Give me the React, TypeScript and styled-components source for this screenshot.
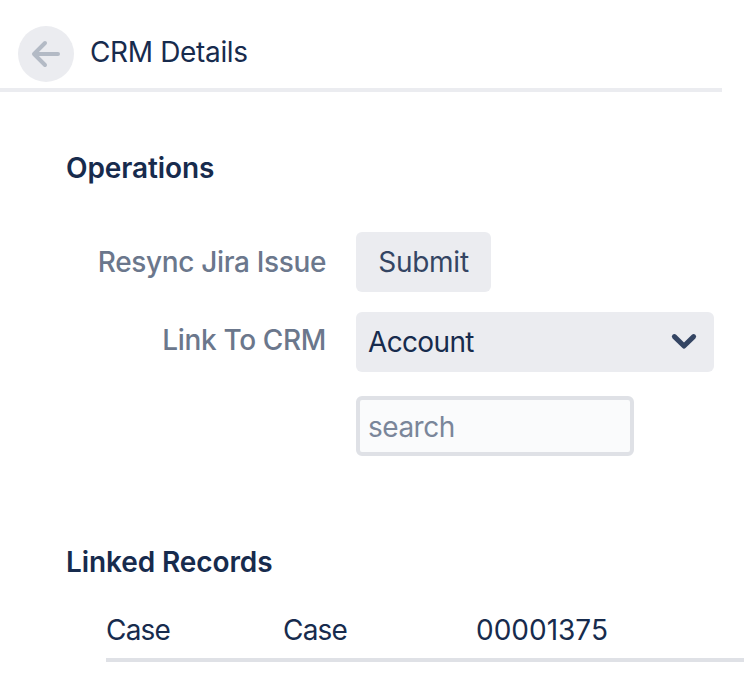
import React from 'react';
import styled, { createGlobalStyle } from 'styled-components';

const GlobalStyle = createGlobalStyle`
  * {
    box-sizing: border-box;
  }

  body {
    margin: 0;
    background: #ffffff;
    color: #172b4d;
    font-family: Inter, 'Liberation Sans', sans-serif;
    font-size: 28px;
    overflow: hidden;
  }
`;

const Panel = styled.main`
  width: 744px;
  height: 686px;
  overflow: hidden;
`;

const Header = styled.header`
  display: flex;
  align-items: flex-end;
  gap: 16px;
  width: 722px;
  height: 92px;
  padding: 0 0 6px 18px;
  border-bottom: 4px solid #ebecf0;
`;

const BackButton = styled.button`
  display: flex;
  align-items: center;
  justify-content: center;
  width: 56px;
  height: 56px;
  padding: 0;
  border: 0;
  border-radius: 50%;
  background: #ebecf0;
`;

const Title = styled.h1`
  margin: 0 0 12px;
  font-size: 28px;
  font-weight: 400;
  line-height: 36px;
  letter-spacing: -0.35px;
`;

const SectionTitle = styled.h2`
  margin: 0 0 0 66px;
  font-size: 28px;
  font-weight: 600;
  line-height: 36px;
  letter-spacing: -0.1px;
`;

const Operations = styled.section`
  padding-top: 58px;
`;

const Form = styled.form`
  display: grid;
  grid-template-columns: 326px 358px;
  column-gap: 30px;
  margin-top: 46px;
`;

const Label = styled.label<{ $lineHeight: number }>`
  color: #6b778c;
  font-weight: 500;
  line-height: ${(props) => props.$lineHeight}px;
  letter-spacing: -0.35px;
  text-align: right;
`;

const SubmitButton = styled.button`
  width: 135px;
  height: 60px;
  margin-bottom: 20px;
  padding: 0;
  border: 0;
  border-radius: 6px;
  background: #ebecf0;
  color: #344563;
  font: inherit;
  letter-spacing: -0.25px;
`;

const Select = styled.button`
  display: flex;
  align-items: center;
  justify-content: space-between;
  height: 60px;
  padding: 0 16px 0 12px;
  border: 0;
  border-radius: 6px;
  background: #ebecf0;
  color: #172b4d;
  font: inherit;
  letter-spacing: -0.65px;
`;

const SearchInput = styled.input`
  grid-column: 2;
  width: 278px;
  height: 60px;
  margin-top: 24px;
  padding: 1px 8px 0;
  border: 4px solid #dfe1e6;
  border-radius: 6px;
  background: #fafbfc;
  font: inherit;
  letter-spacing: -0.5px;

  &::placeholder {
    color: #7a869a;
    opacity: 1;
  }
`;

const LinkedRecords = styled.section`
  padding-top: 88px;
`;

const Record = styled.div`
  display: grid;
  grid-template-columns: 177px 193px 1fr;
  height: 56px;
  margin: 26px 0 0 106px;
  border-bottom: 4px solid #dfe1e6;
  line-height: 49px;
`;

const RecordType = styled.span`
  letter-spacing: -0.8px;
`;

function BackIcon() {
  return (
    <svg width="32" height="28" viewBox="0 0 32 28" fill="none">
      <path
        d="M15 3 4 14l11 11M5 14h23"
        stroke="#b3bac5"
        strokeWidth="4"
        strokeLinecap="round"
        strokeLinejoin="round"
      />
    </svg>
  );
}

function ChevronIcon() {
  return (
    <svg width="28" height="20" viewBox="0 0 28 20" fill="none">
      <path
        d="m4.4 4.6 9.6 9.4 9.6-9.4"
        stroke="#344563"
        strokeWidth="5"
        strokeLinecap="round"
        strokeLinejoin="round"
      />
    </svg>
  );
}

function App() {
  return (
    <Panel>
      <GlobalStyle />
      <Header>
        <BackButton aria-label="Back">
          <BackIcon />
        </BackButton>
        <Title>CRM Details</Title>
      </Header>
      <Operations>
        <SectionTitle>Operations</SectionTitle>
        <Form>
          <Label $lineHeight={61}>Resync Jira Issue</Label>
          <SubmitButton type="button">Submit</SubmitButton>
          <Label $lineHeight={57}>Link To CRM</Label>
          <Select type="button">
            Account
            <ChevronIcon />
          </Select>
          <SearchInput placeholder="search" />
        </Form>
      </Operations>
      <LinkedRecords>
        <SectionTitle>Linked Records</SectionTitle>
        <Record>
          <RecordType>Case</RecordType>
          <RecordType>Case</RecordType>
          <span>00001375</span>
        </Record>
      </LinkedRecords>
    </Panel>
  );
}

export default App;
